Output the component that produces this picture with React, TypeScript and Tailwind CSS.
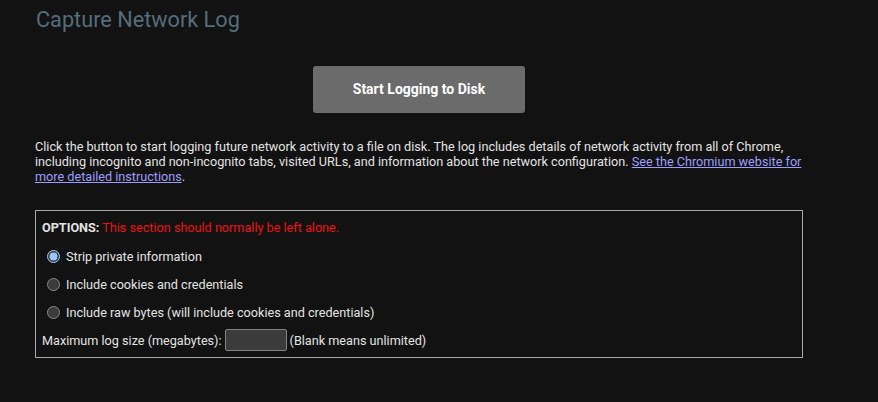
export default function App() {
  return (
    <div className="min-h-[402px] bg-[#121212] pl-[35px] pr-[75px] font-['Roboto',sans-serif] text-[12.65px] leading-[15px] text-[#e3e3e3] [color-scheme:dark]">
      <h1 className="pl-px pt-[6px] text-[21.7px] leading-[28px] text-[#546e7a]">Capture Network Log</h1>

      <div className="mt-[32px] flex justify-center">
        <button className="h-[47px] w-[212px] rounded-[3px] bg-[#6b6b6b] text-[14px] font-bold text-white">
          Start Logging to Disk
        </button>
      </div>

      <p className="mt-[26px] w-[768px]">
        Click the button to start logging future network activity to a file on disk. The log includes details of
        network activity from all of Chrome, including incognito and non-incognito tabs, visited URLs, and
        information about the network configuration.{" "}
        <a href="#" className="text-[#9e9eff] underline">
          See the Chromium website for more detailed instructions
        </a>
        .
      </p>

      <div className="mt-[26px] w-[768px] border border-[#a9a9a9] px-[6px] pt-[9px] pb-[6px]">
        <div>
          <span className="font-bold">OPTIONS:</span>{" "}
          <span className="text-[#ee1111]">This section should normally be left alone.</span>
        </div>
        <div className="mt-[14px] flex flex-col gap-[13px]">
          <label className="flex items-center">
            <input type="radio" name="mode" defaultChecked className="mt-0 mr-[3px] ml-[5px] h-[13px] w-[13px]" />
            <span className="ml-[3px]">Strip private information</span>
          </label>
          <label className="flex items-center">
            <input type="radio" name="mode" className="mt-0 mr-[3px] ml-[5px] h-[13px] w-[13px]" />
            <span className="ml-[3px]">Include cookies and credentials</span>
          </label>
          <label className="flex items-center">
            <input type="radio" name="mode" className="mt-0 mr-[3px] ml-[5px] h-[13px] w-[13px]" />
            <span className="ml-[3px]">Include raw bytes (will include cookies and credentials)</span>
          </label>
        </div>
        <div className="mt-[9px] flex items-center">
          <span>Maximum log size (megabytes):</span>
          <input
            type="text"
            className="mx-[3px] h-[22px] w-[62px] rounded-[2px] border border-[#858585] bg-[#3b3b3b] px-1"
          />
          <span>(Blank means unlimited)</span>
        </div>
      </div>
    </div>
  );
}
